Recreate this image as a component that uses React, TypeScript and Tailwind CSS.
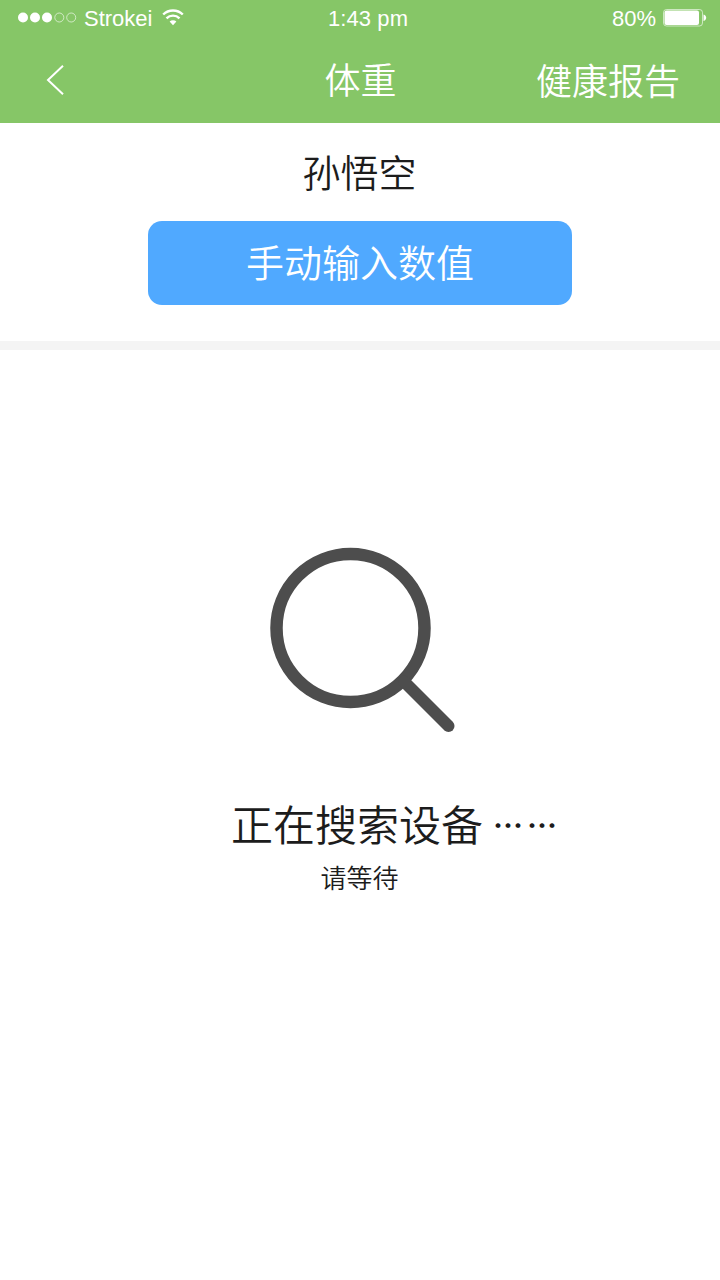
const SignalDots = () => (
  <svg width="60" height="12" viewBox="0 0 60 12" fill="#fff" aria-hidden="true">
    <circle cx="5" cy="5.5" r="5" />
    <circle cx="17" cy="5.5" r="5" />
    <circle cx="29" cy="5.5" r="5" />
    <g fill="none" stroke="#fff" strokeOpacity="0.75" strokeWidth="0.8">
      <circle cx="41.3" cy="5.5" r="4.5" />
      <circle cx="53.2" cy="5.5" r="4.5" />
    </g>
  </svg>
);

const WifiIcon = () => (
  <svg width="22" height="17" viewBox="0 0 22 17" fill="none" stroke="#fff" strokeWidth="2.4" aria-hidden="true">
    <path d="M1.2 5.5a14 14 0 0 1 19.6 0" />
    <path d="M4.5 9.3a9.2 9.2 0 0 1 13 0" />
    <path d="M11 16.2 7.6 12.6a4.9 4.9 0 0 1 6.8 0Z" fill="#fff" stroke="none" />
  </svg>
);

const BatteryIcon = () => (
  <svg width="44" height="18" viewBox="0 0 44 18" aria-hidden="true">
    <rect x="0.5" y="0.5" width="39" height="16.5" rx="3" fill="none" stroke="#fff" strokeOpacity="0.6" />
    <rect x="1.5" y="1.5" width="34.5" height="14.5" rx="2" fill="#fff" />
    <path d="M40.5 5.5c3.6 .8 3.6 5.8 0 6.6Z" fill="#fff" />
  </svg>
);

const SearchIcon = () => (
  <svg width="186" height="186" viewBox="0 0 186 186" fill="none" stroke="#4d4d4d" aria-hidden="true">
    <circle cx="80.5" cy="81" r="74" strokeWidth="12.5" />
    <path d="M134 134.5l44.5 44.5" strokeWidth="12" strokeLinecap="round" />
  </svg>
);

const StatusBar = () => (
  <div className="grid h-[37px] grid-cols-3 items-center font-['Liberation_Sans',sans-serif] text-[22px] font-normal leading-none">
    <div className="flex items-center pl-[18px]">
      <span className="pb-[2px]">
        <SignalDots />
      </span>
      <span className="ml-[6px]">Strokei</span>
      <span className="ml-[10px] pb-[3px]">
        <WifiIcon />
      </span>
    </div>
    <span className="pl-[16px] text-center tracking-[0.1px]">1:43 pm</span>
    <div className="flex items-center justify-end pr-[13px]">
      <span className="mr-[7px]">80%</span>
      <span className="pb-px">
        <BatteryIcon />
      </span>
    </div>
  </div>
);

const NavBar = () => (
  <nav className="grid h-[86px] grid-cols-3 items-center pb-[4px] text-[36px] leading-none">
    <button aria-label="返回" className="pl-[46px] pt-[4px]">
      <svg width="20" height="32" viewBox="0 0 20 32" fill="none" stroke="#fff" strokeWidth="2">
        <path d="M17 1.8 2 16l15 14.2" />
      </svg>
    </button>
    <h1 className="pl-px text-center">体重</h1>
    <a className="pr-[40px] pt-[2px] text-right">健康报告</a>
  </nav>
);

const App = () => {
  return (
    <div className="flex h-[1280px] w-[720px] flex-col bg-white font-['Noto_Sans_CJK_SC',sans-serif] font-[350] text-[#1c1c1c]">
      <header className="bg-[#86c667] text-white">
        <StatusBar />
        <NavBar />
      </header>

      <section className="flex h-[227px] flex-col items-center border-b-[9px] border-[#f4f4f4] pt-[29px]">
        <h2 className="pr-px text-[38px] leading-[38px]">孙悟空</h2>
        <button className="mt-[31px] h-[84px] w-[424px] rounded-[14px] bg-[#50a9ff] pb-[4px] text-[38px] leading-none text-white">
          手动输入数值
        </button>
      </section>

      <main className="flex flex-col items-center pt-[197px]">
        <div className="pl-[5px]">
          <SearchIcon />
        </div>
        <p className="mt-[68px] flex items-center pl-[72px] text-[42px] leading-[42px]">
          正在搜索设备
          <span className="ml-[10px] pt-[2px] text-[30px] font-bold tracking-[4px]">……</span>
        </p>
        <p className="mt-[19px] pr-px text-[26px] leading-[26px]">请等待</p>
      </main>
    </div>
  );
};

export default App;
